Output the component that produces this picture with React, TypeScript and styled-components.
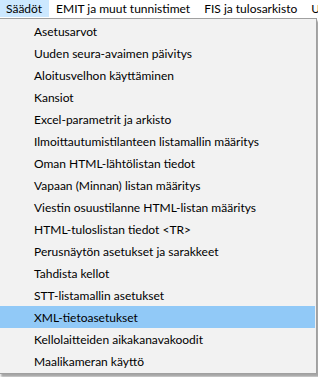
import React from "react";
import styled, { createGlobalStyle } from "styled-components";

const Global = createGlobalStyle`
  html, body { margin: 0; padding: 0; background: #ffffff; overflow: hidden; }
  body { font-family: Lato, "Noto Sans", sans-serif; font-size: 12px; color: #000; }
`;

const Screen = styled.div`
  width: 318px;
  height: 377px;
  overflow: hidden;
  background: #ffffff;
`;

const MenuBar = styled.div`
  display: flex;
  height: 18px;
  margin-left: -1px;
  white-space: nowrap;
`;

const BarItem = styled.div<{ $open?: boolean }>`
  display: flex;
  align-items: center;
  flex-shrink: 0;
  padding: 0 6px;
  height: 17px;
  background: ${(p) => (p.$open ? "#cce8ff" : "transparent")};
  border: 1px solid ${(p) => (p.$open ? "#cce8ff" : "transparent")};
  border-top: none;
  border-bottom: none;
`;

const Dropdown = styled.div`
  margin-left: -2px;
  width: 315px;
  background: #f2f2f2;
  border: 1px solid #a0a0a0;
  padding: 1px;
  box-shadow: 3px 3px 2px rgba(0, 0, 0, 0.35);
`;

const Item = styled.div<{ $active?: boolean }>`
  display: flex;
  align-items: center;
  height: 22px;
  padding-left: 34px;
  background: ${(p) => (p.$active ? "#91c9f7" : "transparent")};
  white-space: nowrap;
`;

const items = [
  "Asetusarvot",
  "Uuden seura-avaimen päivitys",
  "Aloitusvelhon käyttäminen",
  "Kansiot",
  "Excel-parametrit ja arkisto",
  "Ilmoittautumistilanteen listamallin määritys",
  "Oman HTML-lähtölistan tiedot",
  "Vapaan (Minnan) listan määritys",
  "Viestin osuustilanne HTML-listan määritys",
  "HTML-tuloslistan tiedot <TR>",
  "Perusnäytön asetukset ja sarakkeet",
  "Tahdista kellot",
  "STT-listamallin asetukset",
  "XML-tietoasetukset",
  "Kellolaitteiden aikakanavakoodit",
  "Maalikameran käyttö",
];

export default function App() {
  return (
    <Screen>
      <Global />
      <MenuBar>
        <BarItem $open>Säädöt</BarItem>
        <BarItem>EMIT ja muut tunnistimet</BarItem>
        <BarItem>FIS ja tulosarkisto</BarItem>
        <BarItem>Uusi</BarItem>
      </MenuBar>
      <Dropdown>
        {items.map((t) => (
          <Item key={t} $active={t === "XML-tietoasetukset"}>
            {t}
          </Item>
        ))}
      </Dropdown>
    </Screen>
  );
}
